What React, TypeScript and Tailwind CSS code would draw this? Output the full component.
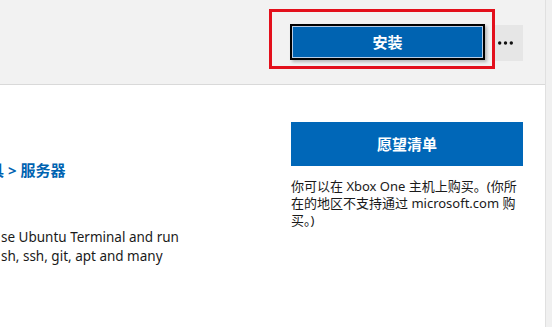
export default function App() {
  const font = { fontFamily: '"Noto Sans", "Noto Sans CJK SC", sans-serif' }

  return (
    <div className="flex h-[327px] w-full overflow-hidden bg-white text-[#1a1a1a]" style={font}>
      <div className="flex min-w-0 flex-1 flex-col">
        {/* Action bar */}
        <div className="relative flex h-[85px] shrink-0 items-start justify-end border-b border-[#d9d9d9] bg-[#f2f2f2] pr-[22px]">
          <div className="mt-[24px] flex items-start gap-[8px]">
            <button className="flex h-[36px] w-[195px] items-center justify-center border-2 border-black bg-[#0063b1] text-[15px] font-bold text-white shadow-[inset_0_0_0_1px_#b7cde6,2px_2px_3px_rgba(0,0,0,0.25)]">
              安装
            </button>
            <button className="mt-px flex h-[36px] w-[30px] items-center bg-[#e6e6e6] pl-[5px]" aria-label="更多">
              <svg width="15" height="4" viewBox="0 0 15 4">
                <circle cx="1.7" cy="2" r="1.7" fill="#111" />
                <circle cx="7.5" cy="2" r="1.7" fill="#111" />
                <circle cx="13.3" cy="2" r="1.7" fill="#111" />
              </svg>
            </button>
          </div>
          {/* highlight frame */}
          <div className="pointer-events-none absolute left-[269px] top-[9px] h-[60px] w-[226px] border-[3px] border-[#e3101c]" />
        </div>

        {/* Content */}
        <div className="flex min-h-0 flex-1">
          <div className="min-w-0 flex-1 overflow-hidden pt-[75px]">
            <div className="whitespace-nowrap text-[15px] font-bold leading-[20px] text-[#0063b1]">
              <span className="-ml-[11px]">具</span> &gt; 服务器
            </div>
            <p className="mt-[48px] whitespace-nowrap pl-px text-[13.5px] leading-[19px]">
              se Ubuntu Terminal and run
              <br />
              sh, ssh, git, apt and many
            </p>
          </div>

          <div className="mr-[22px] w-[232px] shrink-0 pt-[37px]">
            <button className="flex h-[44px] w-full items-center justify-center bg-[#0067b8] text-[15px] font-bold text-white">
              愿望清单
            </button>
            <p className="mt-[12px] text-[13px] leading-[17px]">
              你可以在 Xbox One 主机上购买。(你所在的地区不支持通过 microsoft.com 购买。)
            </p>
          </div>
        </div>
      </div>

      {/* scroll track */}
      <div className="w-[7px] shrink-0 border-l border-[#e0e0e0] bg-[#f0f0f0]" />
    </div>
  )
}
